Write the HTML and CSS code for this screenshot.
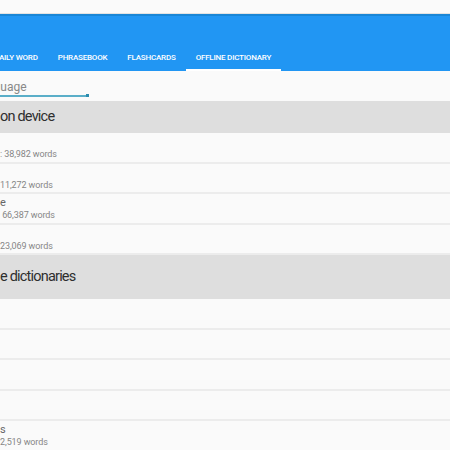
FILE: index.html
```html
<!doctype html>
<html lang="en">
<head>
    <meta charset="UTF-8">
    <meta name="viewport" content="width=device-width, initial-scale=1.0">
    <title>Offline dictionary</title>
    <link rel="stylesheet" href="styles.css">
</head>
<body>
<div class="statusbar"></div>
<header class="appbar">
    <nav class="tabs">
        <a href="#daily" class="tab tab-first">Daily word</a>
        <a href="#phrasebook" class="tab">Phrasebook</a>
        <a href="#flashcards" class="tab">Flashcards</a>
        <a href="#offline" class="tab active">Offline dictionary</a>
    </nav>
</header>
<div class="search">
    <span class="search-field">Language</span>
</div>

<div class="group">on device</div>
<div class="item">
    <div class="item-title"></div>
    <div class="item-sub">: 38,982 words</div>
</div>
<div class="item">
    <div class="item-title"></div>
    <div class="item-sub">11,272 words</div>
</div>
<div class="item">
    <div class="item-title">e</div>
    <div class="item-sub">&nbsp;66,387 words</div>
</div>
<div class="item">
    <div class="item-title"></div>
    <div class="item-sub">23,069 words</div>
</div>

<div class="group group-tall">e dictionaries</div>
<div class="item"></div>
<div class="item"></div>
<div class="item"></div>
<div class="item"></div>
<div class="item">
    <div class="item-title">s</div>
    <div class="item-sub">2,519 words</div>
</div>
</body>
</html>
```

FILE: styles.css
```css
html, body {
    margin: 0;
    padding: 0;
    height: 100%;
    overflow: hidden;
}

body {
    background: #fafafa;
    font-family: Roboto, "Noto Sans", sans-serif;
}

.statusbar {
    height: 13px;
    border-bottom: 1px solid #e3e3e3;
    background: #fafafa;
}

.appbar {
    height: 55px;
    background: #2196f3;
    border-top: 2px solid #1a86d6;
    display: flex;
    align-items: flex-end;
}

.tabs {
    display: flex;
}

.tab {
    padding: 2px 10px 0;
    line-height: 22px;
    font-size: 8px;
    font-weight: 500;
    letter-spacing: -0.2px;
    text-transform: uppercase;
    text-decoration: none;
    color: #fff;
    border-bottom: 2px solid transparent;
}

.tab-first {
    margin-left: -16px;
}

.tab.active {
    border-bottom-color: #fff;
}

.search {
    height: 30px;
}

.search-field {
    position: relative;
    display: inline-block;
    width: 114px;
    margin-left: -26px;
    padding-top: 8px;
    line-height: 16px;
    font-size: 12px;
    color: #888;
    border-bottom: 2px solid #5aaec8;
}

/* cursor handle at the end of the underline */
.search-field::after {
    content: "";
    position: absolute;
    right: -1px;
    bottom: -2px;
    width: 3px;
    height: 3px;
    background: #2c8cae;
}

.group {
    height: 31px;
    padding-bottom: 1px;
    background: #dedede;
    display: flex;
    align-items: center;
    font-size: 14.5px;
    letter-spacing: -0.8px;
    color: #2e2e2e;
}

.group-tall {
    height: 43px;
}

.item {
    box-sizing: border-box;
    height: 30.5px;
    padding-top: 2px;
    border-bottom: 2px solid #ececec;
}

.item-title {
    height: 13px;
    line-height: 13px;
    font-size: 11px;
    color: #666;
}

.item-sub {
    margin-top: 1px;
    line-height: 11px;
    font-size: 9px;
    letter-spacing: -0.1px;
    color: #868686;
}
```
